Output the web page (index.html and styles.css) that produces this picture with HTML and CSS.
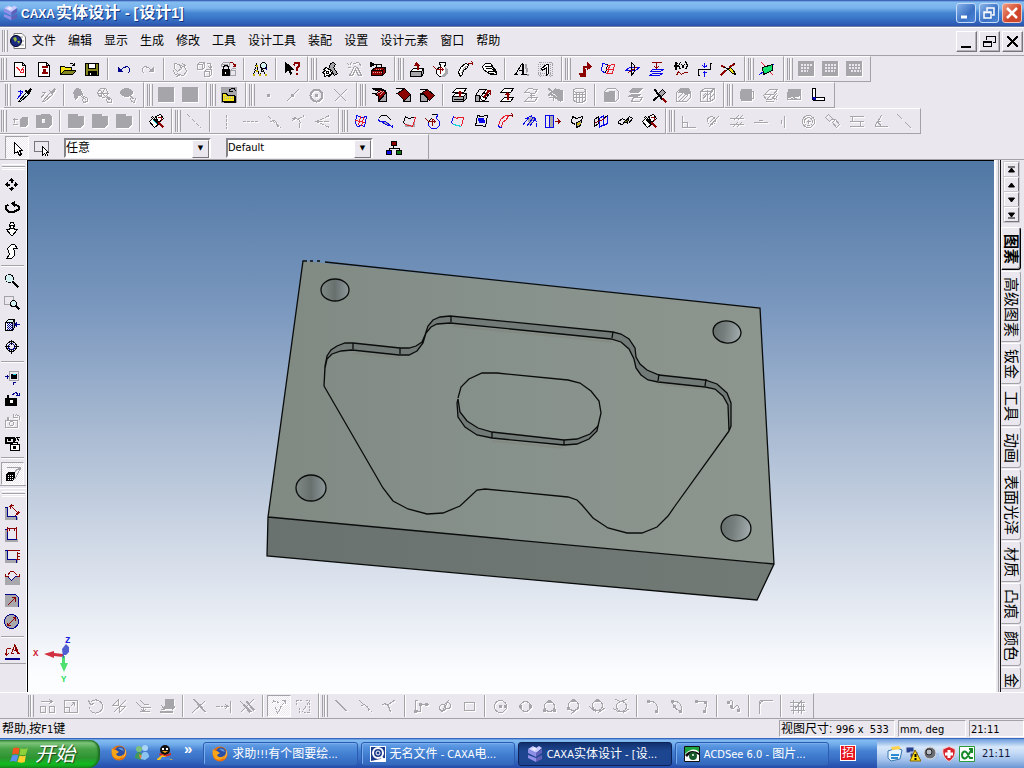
FILE: index.html
```html
<!DOCTYPE html>
<html lang="zh-CN">
<head>
<meta charset="utf-8">
<title>CAXA实体设计 - [设计1]</title>
<link rel="stylesheet" href="styles.css">
</head>
<body>
<svg class="defs" aria-hidden="true">
  <defs>
    <symbol id="caxa" viewBox="0 0 16 16">
      <path fill="#c9c9ff" d="M1 3l5-3 3 2 3-2 3 2-6 5z"/><path fill="#8f8fe8" d="M1 3l8 4v4L1 7zM1 9l8 3v4l-8-4z"/><path fill="#6060b8" d="M9 7l6-4v4l-6 4zM9 12l6-3v4l-6 3z"/><path fill="#e8e8ff" d="M4 3l4-2 2 2-3 2z"/>
    </symbol>
    <symbol id="firefox" viewBox="0 0 16 16">
      <circle cx="8" cy="8" r="7.5" fill="#e8700c"/><circle cx="9" cy="6.5" r="5" fill="#2a4fa8"/><path fill="#5f9be0" d="M7 3c3-1 5 0 6 3l-3-1z"/><path fill="#f9a51a" d="M1 2c0 2 1 3 4 3l3 2-3 2c1 3 5 3 8 0-1 4-6 6-9 4C1 11 0 7 1 2z"/><path fill="#ffd95a" d="M14 4c2 4 0 8-3 9 3-3 3-5 3-9z"/>
    </symbol>
  </defs>
</svg>

<header class="title">
  <svg class="app"><use href="#caxa"/></svg>
  <h1><span>CAXA</span>实体设计<span class="dash"> - [</span>设计<span class="end">1]</span></h1>
  <div class="caps">
    <button title="最小化"><svg viewBox="0 0 18 18"><path d="M4 13h6" stroke-width="3"/></svg></button>
    <button title="还原"><svg viewBox="0 0 18 18"><path d="M4 8h7v6H4zM4 8.500h7M7 7V4h7v7h-2" stroke-width="1.500"/></svg></button>
    <button class="close" title="关闭"><svg viewBox="0 0 18 18"><path d="M4 4l10 10M14 4L4 14" stroke-width="2.500"/></svg></button>
  </div>
</header>

<nav class="menu">
  <i class="grip"></i>
  <svg class="doc" viewBox="0 0 16 16"><path fill="#fff" stroke="#777" d="M4 .5h8l3.500 3.500v11.500H4z"/><path stroke="#999" d="M9 4h4M10 8h4M10 12h4"/><circle cx="6" cy="8" r="5.500" fill="#1a2a80" stroke="#002"/><path fill="#9ab83a" d="M3 5l3-1 1 3-2 2zM7 8l3 0-1 3z"/></svg>
  <button>文件</button><button>编辑</button><button>显示</button><button>生成</button><button>修改</button><button>工具</button><button>设计工具</button><button>装配</button><button>设置</button><button>设计元素</button><button>窗口</button><button>帮助</button>
  <div class="mdi">
    <button title="最小化窗口"><svg viewBox="0 0 16 16"><path d="M3 13h9" stroke-width="2"/></svg></button>
    <button title="还原窗口"><svg viewBox="0 0 16 16"><path d="M2 8h8v5H2zM2 8.500h8M5 7V3h9v6h-3M5 3.500h9"/></svg></button>
    <button title="关闭窗口"><svg viewBox="0 0 16 16"><path d="M3 3l10 10M13 3L3 13" stroke-width="2"/></svg></button>
  </div>
</nav>

<div class="row">
  <div class="bar first"><i class="grip"></i>
    <button class="t" title="新建设计"><svg viewBox="-.5 -.5 16 16"><path class="fw" d="M2 1h8l3 3v11H2zM10 1v3h3"/><path class="R" d="M4 6l2 1 2 3 3-4M5 6l4 6M8 11h3V7M7 11h4"/></svg></button>
    <button class="t" title="新建图纸"><svg viewBox="-.5 -.5 16 16"><path class="fw" d="M2 1h8l3 3v11H2zM10 1v3h3"/><path class="r" d="M5 5h6M5 6h6M7 7v5M8 7v5M9 7v5M5 12h6M5 11h6"/></svg></button>
    <button class="t" title="打开"><svg viewBox="-.5 -.5 16 16"><path class="fy" d="M0 13V5h4l1 1h6v3H5z"/><path class="fo" d="M0 13l4-4h12l-4 4z"/><path d="M9 3c2-2 4-1 5 1M14 1v3h-3"/></svg></button>
    <button class="t" title="保存"><svg viewBox="-.5 -.5 16 16"><path class="fo" d="M1 2h13v12H1z"/><path class="fw" d="M4 2h7v5H4z"/><path class="fk" d="M4 10h8v4H4z"/><path class="ww" d="M6 11v2"/></svg></button>
    <i class="sep"></i>
    <button class="t" title="撤销"><svg viewBox="-.5 -.5 16 16"><path class="n fn" d="M2 6v4h4z"/><path class="n" d="M4 9l3-3 4-1 2 2v3l-2 2"/></svg></button>
    <button class="t" title="重做" disabled><svg viewBox="-.5 -.5 16 16"><path class="fk" d="M13 6v4H9z"/><path d="M11 9L8 6 4 5 2 7v3l2 2"/></svg></button>
    <i class="sep"></i>
    <button class="t" title="更新" disabled><svg viewBox="-.5 -.5 16 16"><path d="M2 2l5 1 2 4-4 3-3-3zM7 4l5 1 2 5-3 4-5-1M1 8c0 4 3 6 6 6M5 12l2 2-3 1M10 2l3 2-2 1"/></svg></button>
    <button class="t" title="链接" disabled><svg viewBox="-.5 -.5 16 16"><path d="M1 3h5v5H1zM1 3l2-2h5v5L6 8M6 3l2-2M8 10h5v5H8zM8 10l2-2h5v5l-2 2M10 2h4v4M12 5l2 2 1-2"/></svg></button>
    <button class="t" title="锁定"><svg viewBox="-.5 -.5 16 16"><path class="s" d="M1 3l2-2h6v4H1zM1 3h6M10 9h5v5h-5zM10 9l2-2h3"/><path class="fk" d="M2 8h7v6H2z"/><path d="M3 8V5l2-1h1l2 1v3"/><path class="ww" d="M5 10v2"/><path class="r" d="M9 1h3l3 4M12 5h3V2"/></svg></button>
    <i class="sep"></i>
    <button class="t" title="查找"><svg viewBox="-.5 -.5 16 16"><path d="M4 2L1 13M4 2l3 12M9 8L8 13M10 7l3 7M2 9h4M8 10h4" stroke-dasharray="3 1"/><path class="y" d="M4 3v2M1 12v2M7 12v2M13 12v2M4 8v2"/><circle class="fc" cx="11" cy="4" r="3"/><path class="n" d="M13 6l2 3"/></svg></button>
    <i class="sep"></i>
    <button class="t" title="帮助指针"><svg viewBox="-.5 -.5 16 16"><path class="fk" d="M1 1v10l3-3 2 5 1-1-2-4h4z"/><path class="r w2" d="M9 4l2-3h3l1 3-3 3v2M12 11v2"/></svg></button>
  </div>
  <div class="bar"><i class="grip"></i>
    <button class="t" title="智能装配"><svg viewBox="-.5 -.5 16 16"><path class="fs" d="M8 2l3-1 2 2-2 3 4 6-3 2-3-5-3-1z"/><path class="fw" d="M2 7l2-1 2 2 2 0 0 2 2 2-2 1-1 2-2-1-3 1v-3L0 11l2-1z"/><path d="M4 10h2v2H4zM1 8l3 1M8 14l-2-2"/></svg></button>
    <button class="t" title="三维球" disabled><svg viewBox="-.5 -.5 16 16"><path d="M1 2l2 2M5 1L3 4M1 6h3M3 14l5-9 3 1 4 8-3 0-3-6-3 6zM7 2l5-1 3 4"/></svg></button>
    <button class="t" title="工具箱"><svg viewBox="-.5 -.5 16 16"><path class="fr" d="M1 9l4-3h10l-3 3zM1 9h11v5H1zM12 9l3-3v5l-3 3z"/><path class="pk" d="M2 11h9M5 8h6" stroke-dasharray="1 1"/><path class="fk" d="M0 1l4 2-4 2z"/><path d="M6 6V3h5v3"/></svg></button>
  </div>
  <div class="bar"><i class="grip"></i>
    <button class="t" title="拉伸特征"><svg viewBox="-.5 -.5 16 16"><path class="fw" d="M1 10l3-3h10l-2 3z"/><path class="fs" d="M1 10h11v5H1zM12 10l2-3v5l-2 3z"/><path class="r w2" d="M8 8V2"/><path class="r fr" d="M7 1l3 3H5z"/></svg></button>
    <button class="t" title="旋转特征"><svg viewBox="-.5 -.5 16 16"><path class="fw" d="M6 1h6v2l-1 2 3 3v4l-3 3H6l-3-3V8l4-3z"/><path class="fs x" d="M11 5l3 3v4l-3 3H7l5-4z"/><path class="r" d="M0 5l3 3h7M8 6l2 2-2 2M7 5v7"/></svg></button>
    <button class="t" title="扫描特征"><svg viewBox="-.5 -.5 16 16"><path class="fw" d="M1 11l2-5 5-4 3 1-1 3-4 3-1 4-2 2z"/><path class="s" d="M4 12l2-5 4-3"/><path class="r" d="M10 2h6M14 0l2 2-2 2"/></svg></button>
    <button class="t" title="放样特征"><svg viewBox="-.5 -.5 16 16"><path class="fw" d="M1 5l3-3h5l6 8v3H9L2 8z"/><path d="M4 7h6l5 5M3 5h7l5 6M6 10h6M8 12l4 0"/></svg></button>
    <i class="sep"></i>
    <button class="t" title="三维文字"><svg viewBox="-.5 -.5 16 16"><path class="s w2" d="M12 3l2 8M13 13h2"/><path d="M0 13h4M7 13h6M2 13l6-10M5 9h5"/><path class="w2" d="M9 2l1 11"/></svg></button>
    <button class="t" title="加厚"><svg viewBox="-.5 -.5 16 16"><path class="s" d="M1 1h14v13H1zM0 3h16M0 12h16M3 0v15M13 0v15" stroke-dasharray="1 1"/><path class="fw" d="M4 7l5-4h2v9l-2 2V6l-4 3z"/></svg></button>
  </div>
  <div class="bar"><i class="grip"></i>
    <button class="t" title="三维曲线"><svg viewBox="-.5 -.5 16 16"><path class="r w2" d="M2 12h5V5h5M3 14h5V7"/><path class="r fr" d="M11 1l4 4-4 3z"/></svg></button>
    <button class="t" title="三维曲面"><svg viewBox="-.5 -.5 16 16"><path class="b" d="M2 2L1 9l4 3M2 2l5 1"/><path d="M7 3L5 12"/><path class="R" d="M7 4l7-1-2 9-7 0M9 4L7 12M5 8h8"/></svg></button>
    <button class="t" title="基准面"><svg viewBox="-.5 -.5 16 16"><path class="b" d="M1 9l4-3h10l-4 3H1z"/><path d="M7 1v13l3-4V4z"/><path class="r" d="M4 11l9-6"/></svg></button>
    <button class="t" title="等距面"><svg viewBox="-.5 -.5 16 16"><path class="b" d="M4 8h11l-3 2H2zM4 12h10l-3 2H1z"/><path class="r" d="M3 1h10M8 1v6M6 5l2 2 2-2"/></svg></button>
    <button class="t" title="公式曲线"><svg viewBox="-.5 -.5 16 16"><path class="w2" d="M3 8V2l2-1M1 4h4"/><path d="M8 1L6 4l2 4M9 3l3 4M12 3L9 7M13 0l2 4-2 4"/><path class="r" d="M4 14l2-4 3 3 3-2h3"/></svg></button>
    <button class="t" title="投影"><svg viewBox="-.5 -.5 16 16"><path d="M2 14V8h12V2M1 14h2M13 2h2"/><path class="b" d="M8 1v5M6 4l2 2 2-2M8 15v-5M6 12l2-2 2 2M6 5h4M6 11h4"/></svg></button>
    <button class="t" title="裁剪曲线"><svg viewBox="-.5 -.5 16 16"><path d="M1 4l7 4M15 1L6 9"/><path class="r w2" d="M0 14l5-5M9 6l5-4M1 4l3 2"/><path class="fy" d="M8 8l4 4 3 1-2-4-3-3z"/></svg></button>
  </div>
  <div class="bar"><i class="grip"></i>
    <button class="t" title="工作平面"><svg viewBox="-.5 -.5 16 16"><path class="R" d="M2 1l12 13"/><path class="b" d="M0 13L15 2"/><path class="fg" d="M3 6l10-3v6L4 13z"/></svg></button>
  </div>
  <div class="bar"><i class="grip"></i>
    <button class="t" title="表格一" disabled><svg viewBox="-.5 -.5 16 16"><path class="fk" d="M0 0h15v14H0z"/><path class="grid" d="M2 3h12M2 6h9M2 9h7"/></svg></button>
    <button class="t" title="表格二" disabled><svg viewBox="-.5 -.5 16 16"><path class="fk" d="M0 0h15v14H0z"/><path class="grid" d="M2 3h12M2 6h12M2 9h10"/></svg></button>
    <button class="t" title="表格三" disabled><svg viewBox="-.5 -.5 16 16"><path class="fk" d="M0 0h15v14H0z"/><path class="grid" d="M2 3h12M2 6h12M4 9h10"/></svg></button>
  </div>
</div>

<div class="row in">
  <div class="bar first"><i class="grip"></i>
    <button class="t" title="拾取属性"><svg viewBox="-.5 -.5 16 16"><path class="b" d="M1 4h5M4 2v4M0 12L6 5"/><path class="fk" d="M11 4l3-3 1 1-3 4z"/><path class="w2" d="M9 3l4 4"/><path class="fc" d="M2 14l8-9 2 2-8 7z"/></svg></button>
    <button class="t" title="应用属性" disabled><svg viewBox="-.5 -.5 16 16"><path class="fk" d="M11 4l3-3 1 1-3 4z"/><path d="M9 3l4 4M2 14l8-9 2 2-8 7zM1 5h4M0 11l5-6"/></svg></button>
    <i class="sep"></i>
    <button class="t" title="移动锚点" disabled><svg viewBox="-.5 -.5 16 16"><path class="fk" d="M1 5l3-4 4 1 2 5-4 1-3 4z"/><path d="M8 8l6 5M10 8l5 3v3l-4 1-1-3"/></svg></button>
    <button class="t" title="旋转锚点" disabled><svg viewBox="-.5 -.5 16 16"><path d="M1 5l3-4 5 0 3 5-4 4-5-1zM3 2l6 7M8 2L4 9M1 6h10M9 9l5 4M11 9l4 3v3l-4 0-1-3"/></svg></button>
    <button class="t" title="附着点" disabled><svg viewBox="-.5 -.5 16 16"><ellipse class="fk" cx="6" cy="5" rx="6" ry="4"/><path d="M9 8l5 4M10 11l1 3 3 1 1-4"/></svg></button>
  </div>
  <div class="bar"><i class="grip"></i>
    <button class="t" title="实体一" disabled><svg viewBox="-.5 -.5 16 16"><path class="fk" d="M0 0h15v14H0z"/></svg></button>
    <button class="t" title="实体二" disabled><svg viewBox="-.5 -.5 16 16"><path class="fk" d="M0 0h15v14H0z"/></svg></button>
  </div>
  <div class="bar"><i class="grip"></i>
    <button class="t" title="设计元素库"><svg viewBox="-.5 -.5 16 16"><path class="fs s" d="M0 0h15v15H0z"/><path class="fy" d="M1 6h4l1 2h7v6H1z"/><path class="s" d="M2 9h10M2 11h10" stroke-dasharray="1 1"/><path d="M14 8v7H2M8 3l2-2h3l1 3M8 1v3h3"/></svg></button>
  </div>
  <div class="bar"><i class="grip"></i>
    <button class="t" title="点" disabled><svg viewBox="-.5 -.5 16 16"><path class="fk" d="M7 7h2v2H7z"/></svg></button>
    <button class="t" title="中点" disabled><svg viewBox="-.5 -.5 16 16"><path d="M2 14L14 2"/><path class="fk" d="M7 7h2v2H7z"/></svg></button>
    <button class="t" title="圆心" disabled><svg viewBox="-.5 -.5 16 16"><circle class="w2" cx="8" cy="8" r="6"/><path class="fk" d="M7 7h2v2H7z"/></svg></button>
    <button class="t" title="交点" disabled><svg viewBox="-.5 -.5 16 16"><path d="M2 2l12 12M14 2L2 14"/></svg></button>
  </div>
  <div class="bar"><i class="grip"></i>
    <button class="t" title="圆角过渡"><svg viewBox="-.5 -.5 16 16"><path class="fs" d="M7 14l8-9v9z"/><path class="fr" d="M2 2h7l6 3-8 8c1-3 0-5-3-6l4-3z"/><path class="pk" d="M6 6l5-3M8 8l4-4"/><path d="M0 1h10l5 3M0 6h4"/></svg></button>
    <button class="t" title="边倒角"><svg viewBox="-.5 -.5 16 16"><path class="fs" d="M8 13l7-6v7H8z"/><path class="fr" d="M2 6l7-5 6 6-6 6z"/><path d="M0 1h9M0 6h2"/></svg></button>
    <button class="t" title="面拔模"><svg viewBox="-.5 -.5 16 16"><path class="fs" d="M1 7h7v7H1z"/><path class="fr" d="M3 5l5-3 7 6-5 5z"/><path d="M0 2h7M0 6h3"/></svg></button>
    <i class="sep"></i>
    <button class="t" title="抽壳"><svg viewBox="-.5 -.5 16 16"><path class="fw" d="M1 5l4-4h10l-3 4zM1 9l3-3h11l-3 3z"/><path class="fs" d="M1 9h11v5H1zM12 9l3-3v5l-3 3z"/><path d="M2 12h9"/><path class="r w2" d="M8 9V3M6 5h4"/></svg></button>
    <button class="t" title="表面移动"><svg viewBox="-.5 -.5 16 16"><path class="fs" d="M0 8h4v6H0z"/><path class="fw" d="M5 9l6-7 3 4-5 7c-3 0-4-2-4-4z"/><path d="M0 8l4-6h6M4 14h9M7 9l4 2M9 6l4 2"/><path class="r w2" d="M8 10l6-7M11 3h4v4"/></svg></button>
    <button class="t" title="表面匹配"><svg viewBox="-.5 -.5 16 16"><path class="fw" d="M1 5l4-4h9l-3 4zM1 14l4-4h9l-3 4z"/><path class="r w2" d="M8 5v7"/><path class="r" d="M5 8l3-3 3 3M6 7h4"/></svg></button>
    <button class="t" title="表面等距" disabled><svg viewBox="-.5 -.5 16 16"><path d="M1 5l4-4 9 1-3 4zM1 14l4-4 9 0-3 4zM8 5v6M6 8h5"/></svg></button>
    <button class="t" title="删除表面" disabled><svg viewBox="-.5 -.5 16 16"><path class="fk" d="M6 5l4-3 5 1v10l-5-4z"/><path class="w2" d="M1 1l6 5M9 1L1 8M4 7l10 7"/><path d="M1 10h5v3"/></svg></button>
    <button class="t" title="编辑半径" disabled><svg viewBox="-.5 -.5 16 16"><ellipse cx="8" cy="3" rx="6" ry="2"/><path d="M2 3v10l4 2h4l4-2V3M2 7h12M2 10h12M5 5v9M8 5v9M11 5v9"/></svg></button>
    <i class="sep"></i>
    <button class="t" title="布尔运算" disabled><svg viewBox="-.5 -.5 16 16"><path d="M1 4l3-3h8l3 3v7l-3 3H1z"/><path class="fk" d="M2 5h3v5h6v4H2zM6 4h5v5H6z"/></svg></button>
    <button class="t" title="分裂零件" disabled><svg viewBox="-.5 -.5 16 16"><path class="fk" d="M2 4l3-3h10l-3 3zM1 9l3-2h9l-3 2z"/><path d="M2 5h9M4 14l2-4h9l-3 4z"/></svg></button>
    <button class="t" title="截面"><svg viewBox="-.5 -.5 16 16"><path class="w2" d="M3 2l8 10M10 6L2 13"/><path class="fs" d="M7 6l4-4 3 3-4 4z"/><path class="r w2" d="M11 11l4 4"/></svg></button>
    <button class="t" title="实体延伸" disabled><svg viewBox="-.5 -.5 16 16"><path d="M1 5l4-4h8l2 3v6l-4 4H1zM3 14l8-8M6 14l6-6M2 11l5-5"/><path class="fk" d="M5 2h8l2 3-3 2-4-2H3z"/></svg></button>
    <button class="t" title="对称移动" disabled><svg viewBox="-.5 -.5 16 16"><path d="M1 4l4-3h10v10l-4 3H1zM1 4h10v10M11 4l4-3M8 2v12M3 12l4-5M3 9l3-3M9 7l5-4M9 12l5-5"/></svg></button>
  </div>
  <div class="bar"><i class="grip"></i>
    <button class="t" title="钣金切割" disabled><svg viewBox="-.5 -.5 16 16"><path class="fk" d="M3 2h10v11H3z"/><path d="M1 4h1v7H1M13 4h2v7h-2"/></svg></button>
    <button class="t" title="钣金展开" disabled><svg viewBox="-.5 -.5 16 16"><path d="M2 7l5-5h8l-4 5zM1 8l3 4h5l5-6M4 12l5-5M9 11h4l2-3M11 13l2-2 2 2M3 14h8"/></svg></button>
    <button class="t" title="钣金还原" disabled><svg viewBox="-.5 -.5 16 16"><path class="fk" d="M2 2h12v6l-4 1H6L2 10z"/><path d="M1 4v8h13V4M4 12l3-2 4 2"/></svg></button>
    <button class="t" title="弯折"><svg viewBox="-.5 -.5 16 16"><path class="fw" d="M2 1h3v9h9v3H3l-1-2z"/><path class="fb n" d="M2 10h3v2H3z"/></svg></button>
  </div>
</div>

<div class="row">
  <div class="bar first"><i class="grip"></i>
    <button class="t" title="布尔" disabled><svg viewBox="-.5 -.5 16 16"><path class="fk" d="M8 6l2-2h6v6l-3 3H8z"/><path d="M0 6h5M2 4v5M0 11h5"/></svg></button>
    <button class="t" title="布尔减" disabled><svg viewBox="-.5 -.5 16 16"><path class="fk" fill-rule="evenodd" d="M0 2h4l1-1h8l2 2v8l-3 3H0zM5 5v5h4V5z"/></svg></button>
    <i class="sep"></i>
    <button class="t" title="合并" disabled><svg viewBox="-.5 -.5 16 16"><path class="fk" d="M0 1h9v2h6v8l-3 3H0z"/></svg></button>
    <button class="t" title="相减" disabled><svg viewBox="-.5 -.5 16 16"><path class="fk" d="M0 1h9v2h6v8l-3 3H0z"/></svg></button>
    <button class="t" title="相交" disabled><svg viewBox="-.5 -.5 16 16"><path class="fk" d="M0 1h9v2h6v8l-3 3H0z"/></svg></button>
    <i class="sep"></i>
    <button class="t" title="剖切"><svg viewBox="-.5 -.5 16 16"><path class="fw" d="M1 8l4-4 5 7-4 3zM7 3l5-2 3 4-5 4z"/><path d="M4 3l7 8M3 4l7 8"/><path class="r w2" d="M10 9l5 5"/><path class="r" d="M9 4h4v3"/><path class="c" d="M5 7l4 4"/></svg></button>
  </div>
  <div class="bar"><i class="grip"></i>
    <button class="t" title="线型" disabled><svg viewBox="-.5 -.5 16 16"><path d="M1 1l14 14" stroke-dasharray="4 2"/></svg></button>
    <i class="sep"></i>
    <button class="t" title="竖直构造线" disabled><svg viewBox="-.5 -.5 16 16"><path d="M8 1v14" stroke-dasharray="3 1"/></svg></button>
    <button class="t" title="水平构造线" disabled><svg viewBox="-.5 -.5 16 16"><path d="M0 8h16" stroke-dasharray="3 1"/></svg></button>
    <button class="t" title="切线构造线" disabled><svg viewBox="-.5 -.5 16 16"><path d="M2 3l4 4M4 8c4-2 7 0 7 5M6 7l9 8" stroke-dasharray="4 1"/></svg></button>
    <button class="t" title="垂直构造线" disabled><svg viewBox="-.5 -.5 16 16"><path d="M2 5c4-2 7 1 8 5M7 6l7-4M2 7l4-3M9 9v5" stroke-dasharray="5 1"/></svg></button>
    <button class="t" title="角平分线" disabled><svg viewBox="-.5 -.5 16 16"><path d="M15 2L2 8l13 6M3 8h12" stroke-dasharray="5 1"/></svg></button>
  </div>
  <div class="bar"><i class="grip"></i>
    <button class="t" title="网格面"><svg viewBox="-.5 -.5 16 16"><path class="b" d="M3 2l3 1 3 1 4-1-2 10-3-1-4 1-2-3z"/><path class="R" d="M7 3L5 12M2 7l10 2M10 4l-2 9"/></svg></button>
    <button class="t" title="放样面"><svg viewBox="-.5 -.5 16 16"><path class="fs x" d="M3 8h7l4 5z"/><path d="M1 5l3-3h5l5 5"/><path class="b" d="M1 5v2l2 1h5l7 6v-3M5 9l7 4"/></svg></button>
    <button class="t" title="直纹面"><svg viewBox="-.5 -.5 16 16"><path class="fs x" d="M3 10l8 2 2-6v7l-9 0z"/><path d="M2 9l2-6 3 2 6-1M2 9l2 2"/><path class="R" d="M14 4l-3 9-7-2M12 4h2"/></svg></button>
    <button class="t" title="旋转面"><svg viewBox="-.5 -.5 16 16"><path d="M6 1h6l-1 4M3 10V8l3-3"/><path class="b" d="M12 1l-1 4 3 3v4l-3 3H6l-3-3V9"/><path class="r" d="M0 5l3 3h6M8 6l2 2-2 2M7 5v7"/></svg></button>
    <button class="t" title="边界面"><svg viewBox="-.5 -.5 16 16"><path class="R" d="M4 3l3 2 2-1h5l-2 9"/><path class="b" d="M4 3L2 9l2 2"/><path class="c" d="M4 11l8 2"/></svg></button>
    <button class="t" title="填充面"><svg viewBox="-.5 -.5 16 16"><path d="M4 2l4 1 6-1-1 6-1 5-5-1-5 0 1-4z"/><path class="fb b" d="M5 5h5l1 4-5 0z"/></svg></button>
    <button class="t" title="导动面"><svg viewBox="-.5 -.5 16 16"><path class="R" d="M1 12l2-6 5-4h3l-2 4-4 3-1 5"/><path class="b" d="M1 12l1 2h2"/><path class="r" d="M11 2h5M14 0l2 2-2 2"/></svg></button>
    <button class="t" title="偏移面"><svg viewBox="-.5 -.5 16 16"><path class="fs x" d="M6 5l5-2 2 2-5 7z"/><path class="b" d="M1 12l7-9 5 1 2 5M4 5l7-3M5 13l6-8M8 13l6-8M15 9v4"/></svg></button>
    <button class="t" title="延伸面"><svg viewBox="-.5 -.5 16 16"><path class="b" d="M0 2h4v12H0z"/><path class="fs b" d="M4 2h4v12H4z"/><path class="r" d="M9 8h6M12 5l3 3-3 3M13 6v4"/></svg></button>
    <button class="t" title="曲面过渡"><svg viewBox="-.5 -.5 16 16"><path d="M3 3l4 2 6-2-1 6M3 3L2 9l4 2"/><path class="fs" d="M7 9l5-2-1 5-4 2z"/><path class="y" d="M8 11l3-2"/></svg></button>
    <button class="t" title="曲面裁剪"><svg viewBox="-.5 -.5 16 16"><path d="M1 13V6l4-3v7zM10 12V5l4-3v8z"/><path class="b" d="M6 14V5l4-3v9zM10 12l4-2V2"/><path class="r" d="M2 9l10-4"/></svg></button>
    <button class="t" title="曲面缝合"><svg viewBox="-.5 -.5 16 16"><path d="M1 8l4-3 3 2-3 4-4-1zM8 8l4-5 3 2-4 5"/><path class="fo" d="M7 8l4-3-1 5z"/></svg></button>
    <button class="t" title="实体化"><svg viewBox="-.5 -.5 16 16"><path class="fw" d="M1 8l4-4 5 7-4 3zM7 3l5-2 3 4-5 4z"/><path d="M4 3l7 8M3 4l7 8"/><path class="r w2" d="M10 9l5 5"/><path class="r" d="M9 4h4v3"/></svg></button>
  </div>
  <div class="bar"><i class="grip"></i>
    <button class="t" title="垂直约束" disabled><svg viewBox="-.5 -.5 16 16"><path d="M2 2v12h13M2 9h5v5"/></svg></button>
    <button class="t" title="相切约束" disabled><svg viewBox="-.5 -.5 16 16"><circle cx="7" cy="7" r="4"/><path d="M4 14L14 3M5 9l5-5"/></svg></button>
    <button class="t" title="平行约束" disabled><svg viewBox="-.5 -.5 16 16"><path d="M1 5h14M1 11h14M5 7l5-5M9 7l5-5M4 14l5-5M8 14l5-5"/></svg></button>
    <button class="t" title="水平约束" disabled><svg viewBox="-.5 -.5 16 16"><path d="M1 9h14M6 7h4"/></svg></button>
    <button class="t" title="竖直约束" disabled><svg viewBox="-.5 -.5 16 16"><path d="M8 2v12M5 6v4"/></svg></button>
    <button class="t" title="同心约束" disabled><svg viewBox="-.5 -.5 16 16"><circle cx="8" cy="8" r="6"/><circle cx="8" cy="8" r="4"/><path d="M6 8h4M8 6v4"/></svg></button>
    <button class="t" title="等长约束" disabled><svg viewBox="-.5 -.5 16 16"><path d="M1 4l3-3 4 4-3 3zM8 9l3-3 4 5-3 3zM6 6h5"/></svg></button>
    <button class="t" title="共线约束" disabled><svg viewBox="-.5 -.5 16 16"><path d="M1 3h14M1 8h14M1 13h14M4 3v5M12 8v5"/></svg></button>
    <button class="t" title="角度约束" disabled><svg viewBox="-.5 -.5 16 16"><path d="M2 13h13M2 13L9 2M5 8l4 5M5 8h3"/></svg></button>
    <button class="t" title="构造线约束" disabled><svg viewBox="-.5 -.5 16 16"><path d="M1 1l5 5M9 9l6 6"/></svg></button>
  </div>
</div>

<div class="pickrow">
  <div class="bar pick">
    <button class="t on" title="选择"><svg viewBox="-.5 -.5 16 16"><path class="fw" d="M5 2v11l3-2 2 4 2-1-2-4h3z"/></svg></button>
    <button class="t" title="框选"><svg viewBox="-.5 -.5 16 16"><path class="s2" d="M1 1h14v10H1z"/><path class="fw" d="M9 6v9l2-2 2 3 1-1-1-3h2z"/></svg></button>
    <label class="combo"><select aria-label="选择过滤"><option>任意</option></select></label>
    <label class="combo"><select class="lat" aria-label="配置"><option>Default</option></select></label>
    <button class="t" title="设计树"><svg viewBox="-.5 -.5 16 16"><path d="M7 5v3M3 11V8h10v3"/><path class="fr" d="M5 1h5v4H5z"/><path class="fb" d="M0 10h5v4H0z"/><path class="fgn" d="M10 10h5v4h-5z"/></svg></button>
  </div>
</div>

<main class="work">
  <div class="side">
    <div class="vbar"><i class="hgrip"></i>
      <button class="v" title="平移"><svg viewBox="-.5 -.5 16 16"><path class="fk" d="M7 1l2 2H5zM7 13l2-2H5zM1 7l2-2v4zM13 7l-2-2v4z"/><path class="w2" d="M7 2v3M7 9v3M2 7h3M9 7h3"/></svg></button>
      <button class="v" title="旋转"><svg viewBox="-.5 -.5 16 16"><path class="w2" d="M4 5L1 7v2l3 3h6l4-2V7l-3-2H8"/><path class="fk" d="M10 2v5L7 4z"/></svg></button>
      <button class="v" title="前后移动"><svg viewBox="-.5 -.5 16 16"><path class="fw" d="M6 1h3l1 3-1 2 1 2h3l-5 6h-1L2 8h3l1-2-1-2zM5 4h5M5 7h5"/></svg></button>
      <button class="v" title="行走"><svg viewBox="-.5 -.5 16 16"><path class="fw" d="M7 1h3l3 4H9l1 3v4l-3 3H2l3-4-1-3-1-3z"/></svg></button>
      <i class="hsep"></i>
      <button class="v" title="缩放"><svg viewBox="-.5 -.5 16 16"><circle class="fc" cx="5" cy="5" r="4"/><path class="w2" d="M8 8l6 6"/></svg></button>
      <button class="v" title="窗口缩放"><svg viewBox="-.5 -.5 16 16"><path class="s" d="M0 1h9v8H0z"/><circle class="fc" cx="9" cy="8" r="3"/><path class="w2" d="M11 10l4 4"/></svg></button>
      <button class="v" title="从表面看"><svg viewBox="-.5 -.5 16 16"><path class="fc" d="M1 5l3-3h6L8 5z"/><path class="fs" d="M8 5l2-3v8l-2 3z"/><path class="fw" d="M1 5h7v8H1z"/><path class="n" d="M2 6h6M2 8h6M2 10h6M2 12h6M3 7h5M3 9h5M3 11h5" stroke-dasharray="1 1"/><path class="n" d="M10 7h6M12 5l-2 2 2 2M12 5v4"/></svg></button>
      <button class="v" title="指定视点"><svg viewBox="-.5 -.5 16 16"><circle cx="7" cy="7" r="5"/><circle class="n" cx="7" cy="7" r="3"/><path d="M7 0v5M7 9v5M0 7h5M9 7h5"/></svg></button>
      <i class="hsep"></i>
      <button class="v" title="显示全部"><svg viewBox="-.5 -.5 16 16"><path class="s" d="M5 2h9v9H5z"/><path class="fk" d="M7 5h5v4H7z"/><path class="n" d="M0 7h4M3 5v4M9 12v3M8 13h3"/><path class="c" d="M8 5h3"/></svg></button>
      <button class="v" title="保存视向"><svg viewBox="-.5 -.5 16 16"><path class="fk" d="M1 7h11v7H1zM3 4h1v3H3z"/><circle class="fw" cx="7" cy="10" r="2"/><path class="n" d="M8 4l1-2 3-1 2 4M11 4h4V1"/></svg></button>
      <button class="v" title="恢复视向" disabled><svg viewBox="-.5 -.5 16 16"><path d="M1 7h12v7H1zM3 4h1v3H3zM9 4V0M9 4h4M10 3l2-2 3 2v3"/><circle cx="7" cy="10" r="2"/></svg></button>
      <button class="v" title="取消视向"><svg viewBox="-.5 -.5 16 16"><path class="w2" d="M1 2h8v5H1z"/><path class="fw" d="M6 9h9v6H6zM8 7h5v2H8z"/><circle class="fk" cx="5" cy="4" r="1"/><circle class="fk" cx="10" cy="12" r="1"/><path d="M11 2h4M12 2l3 4M11 2v3"/></svg></button>
      <i class="hsep"></i>
      <button class="v on" title="透视"><svg viewBox="-.5 -.5 16 16"><path class="s" d="M1 1h15M6 8l9-7M9 13l6-11M10 4l4-2"/><path class="fk" d="M1 8l2-2h6v5l-2 3H1z"/><path class="ww" d="M2 9h5M2 11h5M2 13h5" stroke-dasharray="1 1"/></svg></button>
    </div>
    <div class="vbar"><i class="hgrip"></i>
      <button class="v" title="智能标注"><svg viewBox="-.5 -.5 16 16"><path class="fs x" d="M0 3h3v9h10v3H0z"/><path class="n" d="M0 3h3v9h9v3"/><path class="r" d="M6 1l8 8M6 4V1h3M14 6v3h-3M4 3l3-3M11 11l5-4"/></svg></button>
      <button class="v" title="水平标注"><svg viewBox="-.5 -.5 16 16"><path class="fs x" d="M0 3h3v9h10v3H0z"/><path class="n" d="M0 3h3v10h9"/><path class="r" d="M3 0v5M12 0v12M3 2h9M5 1v3M10 1v3"/></svg></button>
      <button class="v" title="竖直标注"><svg viewBox="-.5 -.5 16 16"><path class="fs x" d="M0 2h3v9h10v3H0z"/><path class="n" d="M0 2h3v9h9v3"/><path class="r" d="M3 2h12M11 11h4M13 3v7M12 5h3M12 8h3"/></svg></button>
      <button class="v" title="角度标注"><svg viewBox="-.5 -.5 16 16"><path class="fs x" d="M0 6l3 0 4 4 4-4h5v8H0z"/><path class="n" d="M0 6h3l4 4 4-4h5"/><path class="r" d="M3 5l3-4h3l4 4M1 3v3h3M12 6h3V3"/></svg></button>
      <button class="v" title="半径标注"><svg viewBox="-.5 -.5 16 16"><path class="fs x" d="M0 2h11l3 3v9H0z"/><path class="n" d="M0 2h11l3 3v9"/><path class="r" d="M3 13l8-8M7 5h4v4"/></svg></button>
      <button class="v" title="直径标注"><svg viewBox="-.5 -.5 16 16"><circle class="fs n" cx="7" cy="7" r="7"/><path class="r" d="M3 11l8-8M8 3h3v3M3 8v3h3"/></svg></button>
      <i class="hsep"></i>
      <button class="v" title="文字注释"><svg viewBox="-.5 -.5 16 16"><path class="n w2" d="M0 14h15"/><path class="r" d="M2 4v7M2 4h4M1 9l1 2 2-2M7 9l3-8 3 8M9 6h3M11 1l3 8M6 9h3M12 9h3"/></svg></button>
    </div>
  </div>

  <section class="view" aria-label="设计视图">
    <svg class="scene" viewBox="28 161 966 531" preserveAspectRatio="xMidYMid slice">
      <defs>
        <linearGradient id="top" x1="0" y1="0" x2="1" y2="0"><stop offset="0" stop-color="#808a83"/><stop offset=".5" stop-color="#88928c"/><stop offset="1" stop-color="#8c968e"/></linearGradient>
        <linearGradient id="front" x1="0" y1="0" x2="1" y2="0"><stop offset="0" stop-color="#6a726f"/><stop offset="1" stop-color="#727a76"/></linearGradient>
        <linearGradient id="hole" x1="0" y1="0" x2="1" y2="0"><stop offset="0" stop-color="#7f8984"/><stop offset=".5" stop-color="#68706e"/><stop offset="1" stop-color="#8f9a9c"/></linearGradient>
        <linearGradient id="hole2" x1="0" y1="0" x2="1" y2="0"><stop offset="0" stop-color="#68706e"/><stop offset=".4" stop-color="#757e7c"/><stop offset="1" stop-color="#a3adae"/></linearGradient>
      </defs>
      <path fill="url(#top)" d="M303 261L760 308l14 256L268 517z"/>
      <path fill="url(#front)" d="M268 517l506 47-17 36-490-44z"/>
      <path class="ink" d="M325 262l435 46 14 256-17 36-490-44 1-39 35-256 4 0M310 261h3M317 261h3M268 517l506 47"/>
      <path class="wall" d="M324 386l1-20 2-10 4-6 6-4 8-3 8 0 47 5h9l7-2 6-4 3-7 3-9 5-6 7-3 10-1 163 16 8 2 8 5 6 9 1 9 4 7 7 6 12 5 46 5 12 4 10 9 4 10v23l-2 5-1-26-5-9-8-7-10-2-47-5-10-2-7-5-5-7-2-9-5-10-8-7-10-3-161-16-13 1-6 3-5 6-3 10-6 8-8 4h-10l-47-5-11 1-9 3-5 5-2 9z"/>
      <path class="ink" d="M353 343v6M400 348v6M451 316v6M613 332l-1 6M659 374l-1 7M706 379l-1 7M324 386l59 102 10 13 15 8 19 5 16-1 17-7 17-16 8-1 83 8 9 3 5 5 11 13 15 10 19 5h15l15-6 11-11 7-10 54-75"/>
      <path fill="none" stroke="#7e7a72" stroke-width="2" opacity=".3" d="M353 353l47 5M452 326l160 16M658 384l47 5M492 441l72 7"/>
      <path class="wall" d="M457 403l1 14 7 10 12 8 15 3 72 7 13-1 12-5 8-8 1-5-8 8-13 5-13 1-72-8-14-4-11-7-7-9-2-13z"/>
      <path class="ink" d="M458 398l3-11 8-8 13-6h15l71 7 12 3 11 8 8 10 2 12-3 13M492 432v6M564 440v5"/>
      <ellipse class="rim" fill="url(#hole)" cx="335" cy="290" rx="14" ry="11"/>
      <ellipse class="rim" fill="url(#hole)" cx="311" cy="488" rx="15" ry="13"/>
      <ellipse class="rim" fill="url(#hole2)" cx="727" cy="332" rx="14" ry="11" transform="rotate(8 727 332)"/>
      <ellipse class="rim" fill="url(#hole2)" cx="736" cy="528" rx="15" ry="13" transform="rotate(8 736 528)"/>
      <g class="axis">
        <path fill="#d03040" d="M44 654l10-3v2l9 1v3l-9-1v2z"/><path fill="#50e070" d="M62 656h3v7h3l-4 9-4-9h2z"/><path fill="#5060d0" d="M62 649l4-5 3 3v5l-3 3h-2v3h-1z"/>
        <text x="33" y="656" fill="#d01830">X</text><text x="65" y="643" fill="#1820e0">Z</text><text x="61" y="682" fill="#30e060">Y</text>
      </g>
    </svg>
  </section>

  <aside class="lib">
    <div class="nav">
      <button title="最前"><svg viewBox="0 0 12 12"><path d="M3 3h7M6.500 4l3 4h-6z"/></svg></button>
      <button title="向前"><svg viewBox="0 0 12 12"><path d="M6.500 4l3 4h-6z"/></svg></button>
      <button title="向后"><svg viewBox="0 0 12 12"><path d="M6.500 8l3-4h-6z"/></svg></button>
      <button title="最后"><svg viewBox="0 0 12 12"><path d="M3 9h7M6.500 8l3-4h-6z"/></svg></button>
    </div>
    <div class="tabs" role="tablist">
      <button role="tab" aria-selected="true">图素</button><button role="tab">高级图素</button><button role="tab">钣金</button><button role="tab">工具</button><button role="tab">动画</button><button role="tab">表面光泽</button><button role="tab">材质</button><button role="tab">凸痕</button><button role="tab">颜色</button><button role="tab">金</button>
    </div>
  </aside>
</main>

<div class="row draw">
  <div class="bar first"><i class="grip"></i>
    <button class="t" title="移动" disabled><svg viewBox="-.5 -.5 16 16"><path d="M1 8h5v6H1zM10 8h5v6h-5zM1 3h11M10 1l3 2-3 2"/></svg></button>
    <button class="t" title="缩放曲线" disabled><svg viewBox="-.5 -.5 16 16"><path d="M1 2h13v12H1zM1 9h5v5M7 8l4-4M8 4h3v3"/></svg></button>
    <button class="t" title="旋转曲线" disabled><svg viewBox="-.5 -.5 16 16"><path d="M3 4c4-5 12-2 12 4s-8 9-12 4M1 2l2 4 4-1M2 8v2"/></svg></button>
    <button class="t" title="镜像" disabled><svg viewBox="-.5 -.5 16 16"><path d="M1 7l6-6v6zM8 8h6l-6 6zM2 14L14 2"/></svg></button>
    <button class="t" title="偏置" disabled><svg viewBox="-.5 -.5 16 16"><path d="M1 4l5 5h9M5 2l4 4h4M4 13h10M8 9v4M6 11l2 2 2-2"/></svg></button>
    <button class="t" title="投影约束" disabled><svg viewBox="-.5 -.5 16 16"><path class="fk" d="M7 2h6v4H7zM5 9h9v1H5zM1 13h12v1H1z"/><path d="M6 1h8v6H6zM4 8h11M2 7l4 5M1 11h3V8M12 12l3-3"/></svg></button>
    <i class="sep"></i>
    <button class="t" title="裁剪" disabled><svg viewBox="-.5 -.5 16 16"><path d="M2 1l12 13M3 1l12 13M14 2L1 14"/></svg></button>
    <button class="t" title="延长" disabled><svg viewBox="-.5 -.5 16 16"><path d="M0 8h7M8 8h5M10 6l3 2-3 2" stroke-dasharray="4 1"/><path class="w2" d="M15 2v12"/></svg></button>
    <button class="t" title="打断" disabled><svg viewBox="-.5 -.5 16 16"><path d="M1 3l12 11M14 1L1 14"/><path class="w2" d="M7 3l8 9M4 6l7 8"/></svg></button>
    <i class="sep"></i>
    <button class="t on" title="显示曲线尺寸" disabled><svg viewBox="-.5 -.5 16 16"><path d="M1 3h5l1 2M2 2l-1 4M8 10l6-8M10 2h4v4M4 9l2 6 3-5" stroke-dasharray="3 1"/></svg></button>
    <button class="t" title="显示端点尺寸" disabled><svg viewBox="-.5 -.5 16 16"><path d="M1 2h5M1 1v5M4 14V8M6 14l8-11M10 2h4v12M8 14h6" stroke-dasharray="2 1"/></svg></button>
  </div>
  <div class="bar"><i class="grip"></i>
    <button class="t" title="直线" disabled><svg viewBox="-.5 -.5 16 16"><path d="M2 2l11 11M3 2l11 11"/></svg></button>
    <button class="t" title="切线" disabled><svg viewBox="-.5 -.5 16 16"><path d="M2 2l5 5M4 7c4-2 7 1 7 6M9 8l6 6" stroke-dasharray="5 1"/></svg></button>
    <button class="t" title="法线" disabled><svg viewBox="-.5 -.5 16 16"><path d="M1 6c4-2 7 1 8 8M7 6l7-5"/></svg></button>
    <i class="sep"></i>
    <button class="t" title="连续直线" disabled><svg viewBox="-.5 -.5 16 16"><path d="M2 2v11h5V6h8M1 2h3M1 12h3"/><path class="fk" d="M6 5h2v2H6zM12 5h2v2h-2zM1 12h2v2H1z"/></svg></button>
    <button class="t" title="样条" disabled><svg viewBox="-.5 -.5 16 16"><circle cx="5" cy="9" r="3"/><circle cx="10" cy="7" r="3"/><path d="M4 14l7-12"/></svg></button>
    <button class="t" title="矩形" disabled><svg viewBox="-.5 -.5 16 16"><path d="M3 4h10v8H3z"/></svg></button>
    <i class="sep"></i>
    <button class="t" title="圆" disabled><svg viewBox="-.5 -.5 16 16"><circle cx="7" cy="8" r="6"/><path class="fk" d="M6 7h2v2H6zM11 7h2v2h-2z"/></svg></button>
    <button class="t" title="两点圆" disabled><svg viewBox="-.5 -.5 16 16"><circle cx="8" cy="8" r="5"/><path class="fk" d="M2 7h2v2H2zM12 7h2v2h-2z"/></svg></button>
    <button class="t" title="三点圆" disabled><svg viewBox="-.5 -.5 16 16"><circle cx="8" cy="8" r="5"/><path class="fk" d="M7 2h2v2H7zM2 11h2v2H2zM12 11h2v2h-2z"/></svg></button>
    <button class="t" title="一切点圆" disabled><svg viewBox="-.5 -.5 16 16"><circle cx="8" cy="7" r="5"/><path class="fk" d="M7 1h2v2H7zM2 9h2v2H2z"/><path d="M6 15l8-6"/></svg></button>
    <button class="t" title="两切点圆" disabled><svg viewBox="-.5 -.5 16 16"><circle cx="8" cy="7" r="5"/><path class="fk" d="M7 1h2v2H7z"/><path d="M0 8l7 6M9 14l7-5"/></svg></button>
    <button class="t" title="三切点圆" disabled><svg viewBox="-.5 -.5 16 16"><circle cx="8" cy="8" r="5"/><path d="M2 1l5 2M9 2l5-1M0 10l6 4M10 14l6-4"/></svg></button>
    <i class="sep"></i>
    <button class="t" title="圆弧" disabled><svg viewBox="-.5 -.5 16 16"><path d="M3 3c6-1 10 3 9 10"/><path class="fk" d="M2 2h2v2H2zM10 12h2v2h-2z"/></svg></button>
    <button class="t" title="圆心圆弧" disabled><svg viewBox="-.5 -.5 16 16"><path d="M3 3c6-1 10 3 9 10M3 3l1 5 6 5"/><path class="fk" d="M2 2h2v2H2zM4 7h2v2H4zM10 12h2v2h-2z"/></svg></button>
    <button class="t" title="三点圆弧" disabled><svg viewBox="-.5 -.5 16 16"><path d="M3 3h7l3 2-1 8"/><path class="fk" d="M2 2h2v2H2zM11 3h2v2h-2zM10 12h2v2h-2z"/></svg></button>
    <i class="sep"></i>
    <button class="t" title="B样条" disabled><svg viewBox="-.5 -.5 16 16"><path d="M3 3c4-2 6 1 3 4s2 4 4 1 4 1 4 4"/><path class="fk" d="M2 3h2v2H2zM5 7h2v2H5zM12 11h2v2h-2z"/></svg></button>
    <i class="sep"></i>
    <button class="t" title="圆角" disabled><svg viewBox="-.5 -.5 16 16"><path d="M2 15V8c0-4 2-6 6-6h7M2 2h3M2 2v3"/></svg></button>
    <i class="sep"></i>
    <button class="t" title="构造几何" disabled><svg viewBox="-.5 -.5 16 16"><path d="M0 4h15M0 8h15M1 12h14M4 1v14M12 1v14M5 11l6-8M9 3v11M14 5v7"/></svg></button>
  </div>
</div>

<footer class="status">
  <p>帮助,按<span>F1</span>键</p>
  <p class="cell size">视图尺寸: <span>996 x&nbsp; 533</span></p>
  <p class="cell unit"><span>mm, deg</span></p>
  <p class="cell time"><span>21:11</span></p>
</footer>

<div class="task">
  <button class="start"><svg viewBox="0 0 18 18"><path fill="#f0561d" d="M3 3c2-1 4-1 6 0L8 9C6 8 4 8 2 9z"/><path fill="#8fd13a" d="M10 3c2 1 4 1 7 0l-2 6c-2 1-4 1-6 0z"/><path fill="#5a8ff0" d="M2 10c2-1 4-1 6 0l-2 6c-2-1-4-1-6 0z"/><path fill="#ffd02c" d="M9 10c2 1 4 1 6 0l-1 6c-2 1-4 1-7 0z"/></svg>开始</button>
  <div class="quick">
    <a href="#" title="Firefox"><svg><use href="#firefox"/></svg></a>
    <a href="#" title="MSN"><svg viewBox="0 0 16 16"><circle cx="5" cy="4" r="3" fill="#7cc07a"/><path fill="#3f9a5a" d="M1 13c0-4 2-6 5-6l3 3-2 5z"/><circle cx="11" cy="3" r="3" fill="#a8d4f6"/><path fill="#8cc4f0" d="M7 14c0-5 1-7 4-7s4 2 4 5l-4 3z"/><path fill="#f0803c" d="M5 9l3 2-2 3z"/></svg></a>
    <a href="#" title="QQ"><svg viewBox="0 0 16 16"><circle cx="8" cy="5" r="5" fill="#111"/><path fill="#fff" d="M5 3h2v2H5zM9 3h2v2H9z"/><path fill="#f2a51a" d="M5 6h6l-3 2z"/><path fill="#d8281e" d="M3 8l5 2 6-2v2l-6 2-6-2z"/><path fill="#f8c020" d="M0 14l5-4 5 2 6 3H0z"/><path fill="#3d7de0" d="M5 12h6l3 3H3z"/></svg></a>
  </div>
  <span class="more">»</span>
  <div class="wins">
    <button><svg><use href="#firefox"/></svg>求助<span>!!!</span>有个图要绘<span>...</span></button>
    <button><svg viewBox="0 0 16 16"><path fill="#fff" d="M0 0h16v16H0z"/><path fill="#1d3b8c" d="M1 1h14v11L1 15z"/><circle cx="8" cy="7" r="5" fill="none" stroke="#fff" stroke-width="2"/><circle cx="8" cy="7" r="2" fill="none" stroke="#fff"/><path stroke="#fff" stroke-width="2" d="M11 11l4 4"/></svg>无名文件<span> - CAXA</span>电<span>...</span></button>
    <button class="active"><svg><use href="#caxa"/></svg><span>CAXA</span>实体设计<span> - [</span>设<span>...</span></button>
    <button><svg viewBox="0 0 16 16"><path fill="#fff" stroke="#111" d="M.5.5h15v15H.5z"/><path fill="#1ca53c" d="M1 1h14v5C11 2 6 3 1 8z"/><path fill="#111" d="M1 9c4-5 9-5 14-2v2C10 6 6 7 3 11z"/><circle cx="9" cy="10" r="4" fill="#175a2c"/><circle cx="9" cy="9" r="1" fill="#fff"/></svg><span>ACDSee 6.0 - </span>图片<span>...</span></button>
  </div>
  <button class="ime">招</button>
  <div class="tray">
    <svg viewBox="0 0 16 16"><path fill="#e8f4ff" stroke="#3a78b0" d="M1 5l9-3 5 2-2 9-9 2-3-3z"/><path fill="#ffd24a" d="M4 1l8-1 2 3-9 1z"/><path stroke="#2b8ad0" stroke-width="2" d="M4 9h8M4 12h7"/></svg>
    <svg viewBox="0 0 16 16"><path fill="#27408f" stroke="#c8d8f0" d="M1 1h8v6H1zM5 6h8v6H5z"/><path fill="#ffdf1c" stroke="#806000" d="M10 4l6 11H5z"/><path stroke="#000" stroke-width="2" d="M10.500 8v3M10.500 12v2"/></svg>
    <svg viewBox="0 0 16 16"><circle cx="7" cy="7" r="6" fill="#6a6d74" stroke="#ddd"/><circle cx="6" cy="6" r="3" fill="#b8bcc4" stroke="#222"/><path fill="none" stroke="#9cbce8" d="M13 7c2 2 1 5-1 7M15 7c1 3 0 6-1 8"/></svg>
    <svg viewBox="0 0 16 16"><path fill="#d8232c" stroke="#f3d3d5" d="M8 .5l6 2.500c1 6-2 10-6 12.500C4 13 1 9 2 3z"/><path stroke="#fff" stroke-width="3" d="M8 4v8M4 8h8"/></svg>
    <svg viewBox="0 0 16 16"><path fill="#fff" stroke="#2a9a3a" d="M.5.5h15v15H.5z"/><path fill="none" stroke="#168a2a" stroke-width="2" d="M13 3L8 11c-2 3-5 1-5-2s3-5 5-2l3 5h3M10 3h3v4"/></svg>
    <time>21:11</time>
  </div>
</div>
</body>
</html>
```
FILE: styles.css
```css
* { box-sizing: border-box; }
:root { --face: #eae8ee; --line: #a3a2a7; --cjk: "Liberation Sans", "Noto Sans CJK SC", sans-serif; --latin: "DejaVu Sans Condensed", "DejaVu Sans", "Noto Sans CJK SC", sans-serif; }
body { margin: 0; height: 100vh; display: flex; flex-direction: column; overflow: hidden; background: var(--face); color: #000; font: 12px/16px var(--cjk); }
button, select { font: inherit; color: inherit; border: 0; padding: 0; margin: 0; background: none; }
h1, p { margin: 0; }
.defs { position: absolute; width: 0; height: 0; }
.lat { font-family: var(--latin); font-size: 11px; }

.title { flex: none; height: 27px; display: flex; align-items: center; padding: 0 2px 0 3px; border-bottom: 1px solid #6d7f9f; background: linear-gradient(#2748a8 0, #84bdf0 2px, #78b2ec 8px, #4485d2 13px, #3a76c8 18px, #2a53ae 26px); }
.app { width: 15px; height: 16px; margin-right: 3px; }
.title h1 { flex: 1; font: bold 16px/24px var(--cjk); color: #fff; text-shadow: 1px 1px #143380; white-space: pre; }
.title h1 span { font-size: 12px; margin-right: 1px; }
.title h1 .dash { font-size: 14px; margin: 0 1px; }
.title h1 .end { font-size: 14px; }
.caps { display: flex; gap: 3px; }
.caps button { width: 20px; height: 20px; border: 1px solid #c6dbf8; border-radius: 3px; background: linear-gradient(135deg, #88b4ea, #3a70c4 60%, #4d87d8); }
.caps .close { border-color: #f3c4b8; background: linear-gradient(135deg, #ef9a80, #d0452a 60%, #c84830); }
.caps svg { display: block; width: 18px; height: 18px; stroke: #fff; fill: none; }

.menu { flex: none; height: 29px; display: flex; align-items: center; padding: 0 1px 1px 2px; border-top: 1px solid #fff; border-bottom: 1px solid var(--line); }
.menu > .doc { width: 16px; height: 16px; margin: 0 0 0 1px; fill: none; }
.menu > button { padding: 0 6px; }
.mdi { margin-left: auto; display: flex; gap: 2px; }
.mdi button { width: 21px; height: 21px; border: 1px solid; border-color: #fff #77767a #77767a #fff; box-shadow: inset -1px -1px #b4b3b8; }
.mdi svg { display: block; width: 17px; height: 17px; margin: 1px; stroke: #000; fill: none; shape-rendering: crispEdges; }

.grip { flex: none; width: 6px; height: 22px; margin-right: 1px; border: solid; border-width: 0 1px; border-color: #fff var(--line); background: linear-gradient(90deg, transparent 0, transparent 1px, var(--line) 1px, var(--line) 2px, #fff 2px, #fff 3px, transparent 3px); }
.row { flex: none; display: flex; height: 26px; }
.in { padding-left: 4px; }
.bar { display: flex; align-items: center; padding: 0 4px 0 2px; border: 1px solid; border-color: #fff var(--line) var(--line) #fff; }
.bar.first { border-left: 0; padding-left: 1px; padding-right: 3px; }
.sep { width: 2px; height: 22px; margin: 0 3px; border-left: 1px solid var(--line); border-right: 1px solid #fff; }
.t, .v { flex: none; width: 24px; height: 23px; display: grid; place-items: center; }
.t svg, .v svg { width: 16px; height: 16px; fill: none; stroke: currentColor; shape-rendering: crispEdges; }
.t:disabled, .v:disabled { color: #a6a5aa; }
.t:disabled svg, .v:disabled svg { filter: drop-shadow(1px 1px 0 #fff); }
.on { border: 1px solid; border-color: var(--line) #fff #fff var(--line); background: repeating-conic-gradient(#fff 0 25%, var(--face) 0 50%) 0 0 / 2px 2px; }

.w2 { stroke-width: 2; }
.r { stroke: #8c0000; } .R { stroke: #e81c2c; } .b { stroke: #0808e8; } .n { stroke: #00008c; } .c { stroke: #10d0d8; }
.s { stroke: #a3a2a7; } .s2 { stroke: #77767a; } .y { stroke: #c8b400; stroke-width: 2; } .ww { stroke: #fff; } .pk { stroke: #e8a0a0; }
.grid { stroke: #eae8ee; stroke-width: 2; stroke-dasharray: 2 1; }
.fk { fill: currentColor; } .fw { fill: #fff; } .fs { fill: #a8a7ac; } .fr { fill: #8c0000; } .fb { fill: #0808e8; } .fn { fill: #00008c; }
.fy { fill: #f4e418; } .fo { fill: #848420; } .fc { fill: #d4f2f4; } .fg { fill: #10e070; } .fgn { fill: #087808; }
.x { stroke: none; }

.pickrow { flex: none; height: 26px; border-bottom: 1px solid var(--line); }
.pick { width: 429px; height: 25px; padding-left: 5px; padding-top: 1px; border-bottom: 0; border-left: 0; }
.pick .combo { margin-left: 11px; }
.pick .combo + .combo { margin-left: 15px; }
.pick .combo + .t { margin-left: 9px; }
.combo { position: relative; width: 147px; height: 20px; }
.combo select { width: 100%; height: 20px; padding: 0 20px 0 0; appearance: none; background: #fff; border: 2px solid; border-color: #848388 #fff #fff #848388; border-radius: 0; line-height: 16px; }
.combo::after { content: "▼"; position: absolute; right: 2px; top: 2px; width: 15px; height: 16px; font: 7px/15px "DejaVu Sans"; text-align: center; background: var(--face); border: 1px solid; border-color: #fff #77767a #77767a #fff; pointer-events: none; }

.work { flex: 1; min-height: 0; display: flex; }
.side { flex: none; width: 27px; overflow: hidden; border-right: 1px solid #fff; }
.vbar { display: flex; flex-direction: column; align-items: flex-start; padding: 4px 0 0; border-bottom: 1px solid var(--line); }
.vbar + .vbar { margin-top: 2px; border-top: 1px solid #fff; padding-top: 2px; }
.v { width: 24px; height: 22px; }
.v.on { height: 23px; width: 23px; margin-left: 1px; }
.hgrip { width: 23px; height: 6px; margin: 0 0 4px 2px; border: solid; border-width: 1px 0; border-color: #fff var(--line); background: linear-gradient(transparent 1px, var(--line) 1px, var(--line) 2px, #fff 2px, #fff 3px, transparent 3px); }
.hsep { width: 23px; height: 2px; margin: 3px 0 3px 1px; border-top: 1px solid var(--line); border-bottom: 1px solid #fff; }

.view { flex: 1; min-width: 0; border: solid #000; border-width: 1px 0 0 1px; background: linear-gradient(#5078a4, #7b98bf 28%, #a7b9d1 50%, #d5dde9 75%, #fcfdff 97%); }
.scene { display: block; width: 100%; height: 100%; }
.ink { fill: none; stroke: #0a0c0b; stroke-width: 1.3; }
.rim { stroke: #0a0c0b; stroke-width: 1.3; }
.wall { fill: #727a77; stroke: #0a0c0b; stroke-width: 1.3; }
.axis text { font: bold 9px "Liberation Mono", monospace; }

.lib { flex: none; width: 30px; overflow: hidden; padding: 1px 2px 1px 8px; border-left: 2px solid #fff; background: linear-gradient(90deg, var(--face) 2px, #a3a2a7 2px, #a3a2a7 3px, var(--face) 3px, var(--face) 4px, #111 4px, #111 5px, var(--face) 5px); display: flex; flex-direction: column; }
.lib .nav { padding: 1px 0 5px; }
.nav button { display: block; width: 15px; height: 15px; border: 1px solid; border-color: #fff #77767a #77767a #fff; box-shadow: 0 0 0 1px #c8c6cc; }
.nav svg { display: block; width: 12px; height: 12px; fill: #000; stroke: #000; stroke-width: 1; }
.tabs { display: flex; flex-direction: column; align-items: flex-start; margin-left: -3px; }
.tabs button { flex: none; writing-mode: vertical-rl; text-orientation: sideways; width: 20px; height: auto; padding: 5px 0 4px; margin-bottom: 1px; font: 15px/18px var(--cjk); border: 1px solid; border-color: #fff var(--line) var(--line) transparent; border-radius: 0 3px 3px 0; }
.tabs [aria-selected="true"] { padding: 6px 0 5px; font-weight: bold; border-color: #fff #000 #000 #fff; box-shadow: inset -1px -1px #88878c; }
.tabs button:last-child { padding-bottom: 0; }

.draw { padding-left: 27px; border-top: 1px solid #fff; border-bottom: 1px solid var(--line); height: 27px; }
.draw .bar { border-bottom: 0; }
.draw .on { height: 22px; }

.status { flex: none; height: 19px; display: flex; gap: 3px; align-items: center; }
.status span { font: 11px var(--latin); }
.status p:first-child { flex: 1; padding-left: 2px; }
.cell { height: 17px; line-height: 17px; padding-left: 1px; border: 1px solid; border-color: var(--line) #fff #fff var(--line); white-space: nowrap; overflow: hidden; }
.size { width: 116px; } .unit { width: 68px; } .time { width: 55px; }

.task { flex: none; height: 30px; display: flex; align-items: center; color: #fff; background: linear-gradient(#1c4cae 0, #84bcf2 2px, #73aeec 6px, #457fd2 13px, #3a72c6 20px, #264fae 29px); }
.start { flex: none; width: 100px; height: 28px; margin-top: 2px; display: flex; align-items: center; gap: 6px; padding-left: 10px; border-radius: 0 10px 12px 0; background: linear-gradient(#3c8c3c, #7cc47a 3px, #47a347 9px, #2c9430 18px, #10bc20 24px, #18901c); box-shadow: inset -2px 0 2px #1c6a20; font: italic 20px/24px var(--cjk); text-shadow: 1px 1px 1px #1a4a1a; }
.start svg { width: 19px; height: 19px; }
.quick { flex: none; display: flex; gap: 7px; margin-left: 11px; }
.quick a, .quick svg { display: block; width: 16px; height: 16px; }
.more { flex: none; font: bold 15px/16px var(--cjk); margin: 0 11px 8px; }
.wins { flex: 1; min-width: 0; display: grid; grid-template-columns: repeat(4, minmax(0, 1fr)); gap: 3px; }
.wins button { height: 24px; margin-top: 2px; display: flex; align-items: center; padding-left: 8px; text-align: left; white-space: pre; overflow: hidden; border: 1px solid #2c5cb0; border-radius: 3px; background: linear-gradient(#6ca6ea, #5592de 4px, #3c78cc 14px, #3468bc); box-shadow: inset 1px 1px #78aeee; }
.wins svg { flex: none; width: 16px; height: 16px; margin-right: 4px; }
.wins span { font: 11px var(--latin); }
.wins .active { border-color: #0e2258; background: linear-gradient(#12306e, #1d4690 8px, #1c4490); box-shadow: none; }
.ime { flex: none; width: 16px; height: 16px; margin: 0 21px 0 11px; background: #e8141c; border: 1px solid #fff; font: 12px/13px var(--cjk); }
.tray { flex: none; width: 147px; height: 29px; margin-top: 1px; display: flex; align-items: center; gap: 2px; padding-left: 10px; color: #10183c; background: linear-gradient(#6c9cdc, #d8e8fa 8px, #c4daf6 14px, #9cbce8 22px, #6a96d4); }
.tray svg { width: 16px; height: 16px; }
.tray time { margin-left: 5px; font: 11px var(--latin); }
```
